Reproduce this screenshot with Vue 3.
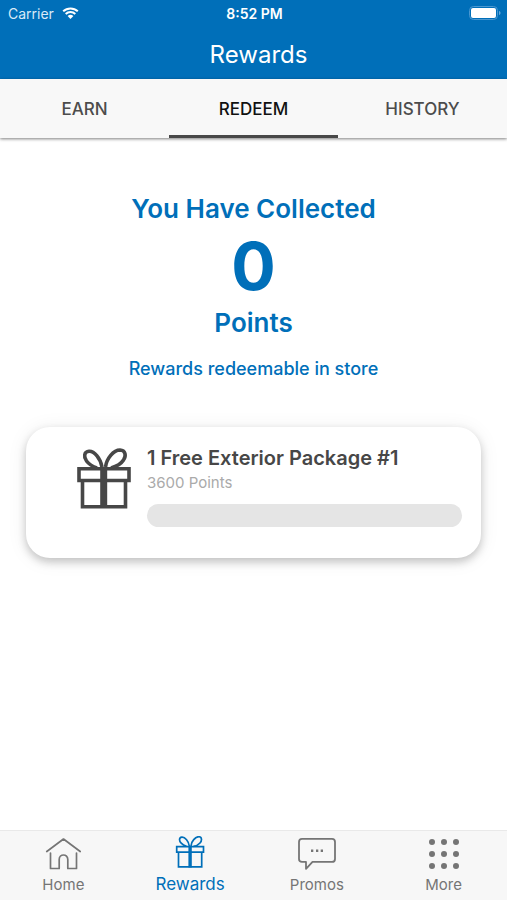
<script setup>
import { ref } from 'vue'

const tabs = ['EARN', 'REDEEM', 'HISTORY']
const activeTab = ref('REDEEM')
const points = ref(0)
const rewards = [{ name: '1 Free Exterior Package #1', cost: 3600 }]
const nav = ['Home', 'Rewards', 'Promos', 'More']
const activeNav = 'Rewards'
const dots = [5, 17, 29]
</script>

<template>
  <div class="screen">
    <header class="header">
      <div class="status">
        <span class="carrier">
          Carrier
          <svg class="wifi" viewBox="0 0 17 12" aria-hidden="true">
            <path d="M1.2 4.3a10.6 10.6 0 0 1 14.6 0M3.7 6.9a7 7 0 0 1 9.6 0" fill="none" stroke="currentColor" stroke-width="2" />
            <path d="M8.5 12 5.6 9.1a4.1 4.1 0 0 1 5.8 0z" fill="currentColor" />
          </svg>
        </span>
        <span class="clock">8:52 PM</span>
        <svg class="battery" viewBox="0 0 32 14" aria-hidden="true">
          <rect x="0.5" y="0.5" width="28" height="13" rx="4" fill="none" stroke="#4a97d0" />
          <rect x="2" y="2" width="25" height="10" rx="2" fill="#fff" />
          <path d="M30 5c2 .6 2 3.400 0 4z" fill="#68a9da" />
        </svg>
      </div>
      <h1 class="title">Rewards</h1>
    </header>

    <div class="tabs" role="tablist">
      <button
        v-for="tab in tabs"
        :key="tab"
        type="button"
        role="tab"
        class="tab"
        :class="{ active: tab === activeTab }"
        :aria-selected="tab === activeTab"
        @click="activeTab = tab"
      >{{ tab }}</button>
    </div>

    <main class="content">
      <section class="summary">
        <p class="lead">You Have Collected</p>
        <p class="points">{{ points }}</p>
        <p class="lead">Points</p>
        <p class="note">Rewards redeemable in store</p>
      </section>

      <article v-for="reward in rewards" :key="reward.name" class="card">
        <svg class="card-icon" viewBox="0 0 54 61" fill="none" stroke="currentColor" stroke-width="3.600" aria-hidden="true">
          <path d="M5.500 32v26.700h43V32M2 20.800h50v11.700H2z" />
          <path d="M25 19C23.500 10.500 17.500 3 12 3.300C7 3.600 6.500 9 9.500 13C11.800 16 15.500 18.500 20 20" />
          <path d="M28.500 19C29.500 10.500 36.500 2 43 2C48.500 2.200 49.500 8 46.500 12C44 16 39 18.500 34 20" />
          <path d="M26.700 19v41" stroke-width="7" />
        </svg>
        <div class="card-body">
          <h2 class="card-title">{{ reward.name }}</h2>
          <p class="cost">{{ reward.cost }} Points</p>
          <div class="track" role="progressbar" aria-valuemin="0" :aria-valuenow="points" :aria-valuemax="reward.cost">
            <div class="fill" :style="{ width: (points / reward.cost) * 100 + '%' }"></div>
          </div>
        </div>
      </article>
    </main>

    <nav class="bottom">
      <a v-for="item in nav" :key="item" href="#" class="nav-item" :class="{ active: item === activeNav }">
        <svg v-if="item === 'Home'" class="nav-icon" viewBox="0 0 36 34" fill="none" stroke="currentColor" stroke-width="1.700" stroke-linecap="round" stroke-linejoin="round" aria-hidden="true">
          <path d="M1.800 14.500 18.500 2l16.700 12.500M5.500 16v15.500h8.700V22.500c0-6 8.600-6 8.600 0v9h8.700V16" />
        </svg>
        <svg v-else-if="item === 'Rewards'" class="nav-icon" viewBox="0 0 36 34" fill="none" stroke="currentColor" stroke-width="1.700" aria-hidden="true">
          <path d="M6.500 16v14.800h23.200V16M4.700 10.600h26.800v5.600H4.700z" />
          <path d="M17.300 10C16.800 5.500 13 .8 9.800 1.100C6.800 1.500 7 5 9.200 7.200C10.700 8.800 12.500 9.700 14.500 10.300" />
          <path d="M19 10C19 5.500 23.500.5 27.200.7C30.200 1.100 30 4.700 28 7C26.500 8.700 23.800 10 21.500 10.300" />
          <path d="M18.100 10v21.500" stroke-width="3.400" />
        </svg>
        <svg v-else-if="item === 'Promos'" class="nav-icon wide" viewBox="0 0 38 34" aria-hidden="true">
          <path d="M4 1.900h30q3 0 3 3v17q0 3-3 3H14.500L8 31.800V24.900H4q-3 0-3-3V4.900q0-3 3-3z" fill="none" stroke="currentColor" stroke-width="1.800" stroke-linejoin="round" />
          <path d="M13 12.500h2.300V15H13zM18 12.500h2.300V15H18zM22.700 12.500H25V15h-2.300z" fill="currentColor" />
        </svg>
        <svg v-else class="nav-icon" viewBox="0 0 34 34" fill="currentColor" aria-hidden="true">
          <template v-for="y in dots" :key="y">
            <circle v-for="x in dots" :key="x" :cx="x" :cy="y" r="3" />
          </template>
        </svg>
        <span>{{ item }}</span>
      </a>
    </nav>
  </div>
</template>

<style>
body {
  margin: 0;
}
</style>

<style scoped>
.screen {
  min-height: 100vh;
  display: flex;
  flex-direction: column;
  background: #fff;
  font-family: Inter, "Liberation Sans", sans-serif;
}

h1,
h2,
p {
  margin: 0;
}

.header {
  background: #006fb9;
  color: #fff;
  padding-bottom: 9px;
}

.status {
  display: grid;
  grid-template-columns: 1fr auto 1fr;
  align-items: center;
  height: 26px;
  padding: 0 6px 0 8px;
  box-sizing: border-box;
  font-size: 14px;
}

.carrier {
  display: flex;
  align-items: center;
  gap: 8px;
  color: #d9eaf7;
}

.wifi {
  width: 17px;
  height: 12px;
  color: #fff;
}

.clock {
  font-weight: 600;
}

.battery {
  justify-self: end;
  width: 32px;
  height: 14px;
}

.title {
  height: 44px;
  padding-left: 10px;
  line-height: 58px;
  font-size: 24px;
  font-weight: 400;
  text-align: center;
}

.tabs {
  display: grid;
  grid-template-columns: repeat(3, 1fr);
  height: 59px;
  background: #f8f8f8;
  box-shadow: 0 1px 3px rgba(0, 0, 0, 0.5);
}

.tab {
  border: 0;
  border-bottom: 3px solid transparent;
  padding: 3px 0 0;
  background: none;
  color: #4c4c4c;
  font-family: inherit;
  font-size: 17px;
  font-weight: 500;
}

.tab.active {
  border-bottom-color: #484848;
  color: #111;
}

.content {
  flex: 1;
  padding: 52px 26px 32px;
}

.summary {
  color: #006fb9;
  text-align: center;
}

.lead {
  line-height: 38px;
  font-size: 26px;
  font-weight: 600;
}

.points {
  line-height: 76px;
  font-size: 66px;
  font-weight: 700;
}

.note {
  margin-top: 12px;
  line-height: 30px;
  font-size: 18px;
  font-weight: 500;
}

.card {
  display: flex;
  gap: 16px;
  margin-top: 43px;
  padding: 20px 19px 31px 51px;
  border-radius: 24px;
  background: #fff;
  color: #474747;
  box-shadow: 0 4px 8px rgba(0, 0, 0, 0.2), 0 2px 20px rgba(0, 0, 0, 0.08);
}

.card-icon {
  flex: none;
  width: 54px;
  height: 61px;
  margin-top: 1px;
}

.card-body {
  flex: 1;
  min-width: 0;
}

.card-title {
  line-height: 22px;
  font-size: 20px;
  font-weight: 600;
}

.cost {
  line-height: 28px;
  font-size: 15px;
  color: #aaa;
}

.track {
  height: 23px;
  margin-top: 7px;
  border-radius: 12px;
  background: #e5e5e5;
  overflow: hidden;
}

.fill {
  height: 100%;
  background: #006fb9;
}

.bottom {
  display: grid;
  grid-template-columns: repeat(4, 1fr);
  height: 69px;
  border-top: 1px solid #e9e9e9;
  background: #f7f7f7;
}

.nav-item {
  display: flex;
  flex-direction: column;
  align-items: center;
  gap: 2px;
  padding-top: 6px;
  color: #757575;
  font-size: 15px;
  line-height: 24px;
  text-decoration: none;
}

.nav-icon {
  width: 36px;
  height: 34px;
}

.nav-icon.wide {
  width: 38px;
}

.nav-item.active {
  padding-top: 5px;
  color: #006fb9;
  font-size: 17px;
}
</style>
